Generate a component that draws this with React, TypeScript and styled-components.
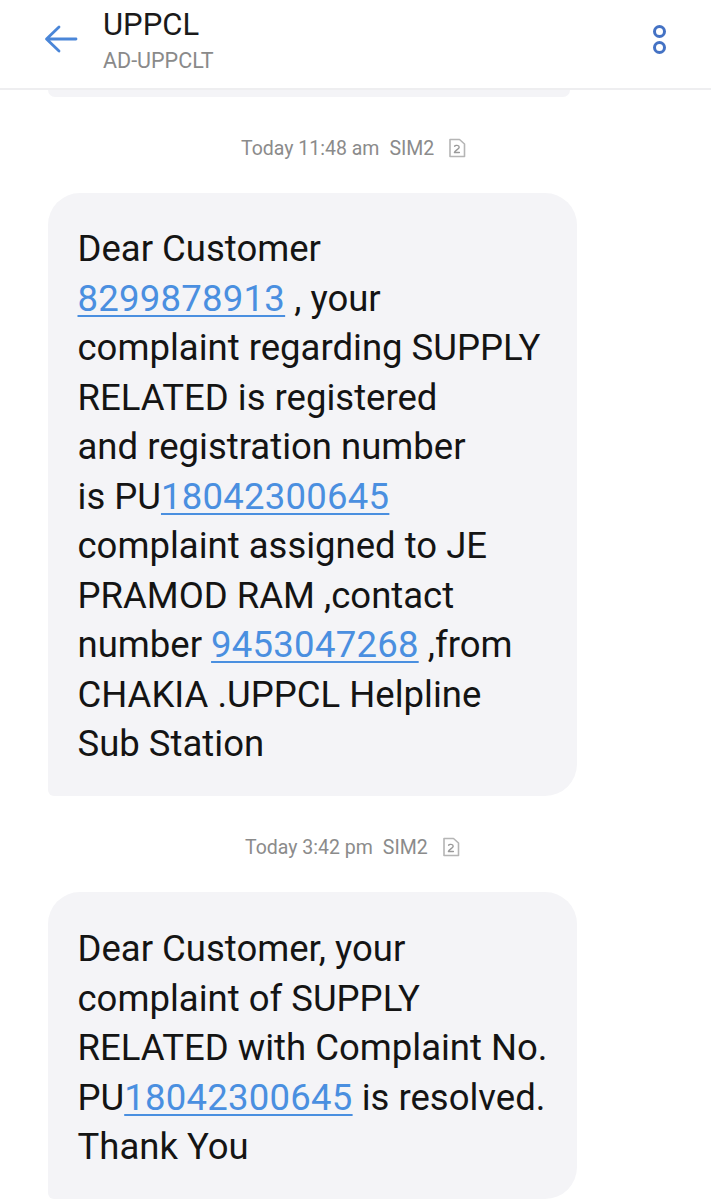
import React from "react";
import styled, { createGlobalStyle } from "styled-components";

const GlobalStyle = createGlobalStyle`
  html, body {
    margin: 0;
    padding: 0;
    background: #ffffff;
  }
  body {
    font-family: Roboto, "Liberation Sans", sans-serif;
  }
`;

const Page = styled.div`
  width: 711px;
  height: 1200px;
  overflow: hidden;
  display: flex;
  flex-direction: column;
`;

const Header = styled.header`
  height: 88px;
  flex: none;
  display: flex;
  align-items: flex-start;
  padding-left: 44px;
  padding-right: 44px;
  background: #ffffff;
  border-bottom: 2px solid #eeeef0;
`;

const BackButton = styled.div`
  width: 34px;
  height: 34px;
  margin-top: 22px;
  margin-right: 25px;
  flex: none;
  color: #4a86d8;
`;

const Titles = styled.div`
  flex: 1;
  display: flex;
  flex-direction: column;
`;

const Title = styled.div`
  margin-top: 6px;
  font-size: 31px;
  line-height: 38px;
  color: #1a1a1a;
`;

const Subtitle = styled.div`
  margin-top: 3px;
  font-size: 21.5px;
  line-height: 28px;
  color: #8a8a8a;
`;

const MoreButton = styled.div`
  width: 14px;
  margin-top: 25px;
  display: flex;
  flex-direction: column;
  gap: 3px;
  flex: none;
`;

const MoreDot = styled.span`
  width: 13px;
  height: 13px;
  box-sizing: border-box;
  border: 3px solid #4472c4;
  border-radius: 50%;
`;

const Thread = styled.main`
  flex: 1;
  display: flex;
  flex-direction: column;
  align-items: flex-start;
  padding-left: 48px;
`;

const PrevBubble = styled.div`
  width: 522px;
  height: 7px;
  background: #f4f4f7;
  border-radius: 0 0 22px 22px;
`;

const Stamp = styled.div<{ $shift: number }>`
  width: 529px;
  box-sizing: border-box;
  margin-top: 39px;
  margin-bottom: 33px;
  padding-left: ${(p) => p.$shift}px;
  display: flex;
  align-items: center;
  height: 24px;
  font-size: 19.5px;
  color: #8b8b8b;
`;

const StampSim = styled.span`
  margin-left: 10px;
`;

const SimIcon = styled.svg`
  width: 18px;
  height: 20px;
  margin-left: 14px;
  flex: none;
`;

const Bubble = styled.div<{ $height: number; $pad: number }>`
  width: 529px;
  height: ${(p) => p.$height}px;
  box-sizing: border-box;
  padding: ${(p) => p.$pad}px 0 0 29.5px;
  background: #f4f4f7;
  border-radius: 32px 32px 32px 6px;
  flex: none;
`;

const Line = styled.div`
  height: 49.5px;
  line-height: 49.5px;
  font-size: 36.5px;
  color: #141414;
  white-space: pre;
`;

const Link = styled.span`
  color: #4a8fe0;
  letter-spacing: 0.25px;
  text-decoration: underline;
  text-decoration-thickness: 2px;
  text-underline-offset: 4px;
`;

function SimBadge() {
  return (
    <SimIcon viewBox="0 0 18 20" fill="none">
      <path
        d="M2 1.5h9.5L16.5 6v12.5H2z"
        stroke="#b5b5b5"
        strokeWidth="1.6"
        strokeLinejoin="round"
      />
      <path
        d="M6.6 8.2c.4-1.2 4.6-1.3 4.6 1 0 1.8-4.6 3.4-4.8 5.3h5"
        stroke="#9a9a9a"
        strokeWidth="1.4"
        strokeLinecap="round"
        strokeLinejoin="round"
      />
    </SimIcon>
  );
}

export default function App() {
  return (
    <Page>
      <GlobalStyle />
      <Header>
        <BackButton>
          <svg width="34" height="34" viewBox="0 0 34 34" fill="none">
            <path
              d="M32 17H3M15 5L2.5 17L15 29"
              stroke="currentColor"
              strokeWidth="2.8"
              strokeLinecap="round"
              strokeLinejoin="round"
            />
          </svg>
        </BackButton>
        <Titles>
          <Title>UPPCL</Title>
          <Subtitle>AD-UPPCLT</Subtitle>
        </Titles>
        <MoreButton>
          <MoreDot />
          <MoreDot />
        </MoreButton>
      </Header>
      <Thread>
        <PrevBubble />
        <Stamp $shift={193}>
          Today 11:48 am
          <StampSim>SIM2</StampSim>
          <SimBadge />
        </Stamp>
        <Bubble $height={603} $pad={31}>
          <Line>Dear Customer</Line>
          <Line>
            <Link>8299878913</Link> , your
          </Line>
          <Line>complaint regarding SUPPLY</Line>
          <Line>RELATED is registered</Line>
          <Line>and registration number</Line>
          <Line>
            is PU<Link>18042300645</Link>
          </Line>
          <Line>complaint assigned to JE</Line>
          <Line>PRAMOD RAM ,contact</Line>
          <Line>
            number <Link>9453047268</Link> ,from
          </Line>
          <Line>CHAKIA .UPPCL Helpline</Line>
          <Line>Sub Station</Line>
        </Bubble>
        <Stamp $shift={197}>
          Today 3:42 pm
          <StampSim>SIM2</StampSim>
          <SimBadge />
        </Stamp>
        <Bubble $height={307} $pad={32}>
          <Line>Dear Customer, your</Line>
          <Line>complaint of SUPPLY</Line>
          <Line>RELATED with Complaint No.</Line>
          <Line>
            PU<Link>18042300645</Link> is resolved.
          </Line>
          <Line>Thank You</Line>
        </Bubble>
      </Thread>
    </Page>
  );
}
